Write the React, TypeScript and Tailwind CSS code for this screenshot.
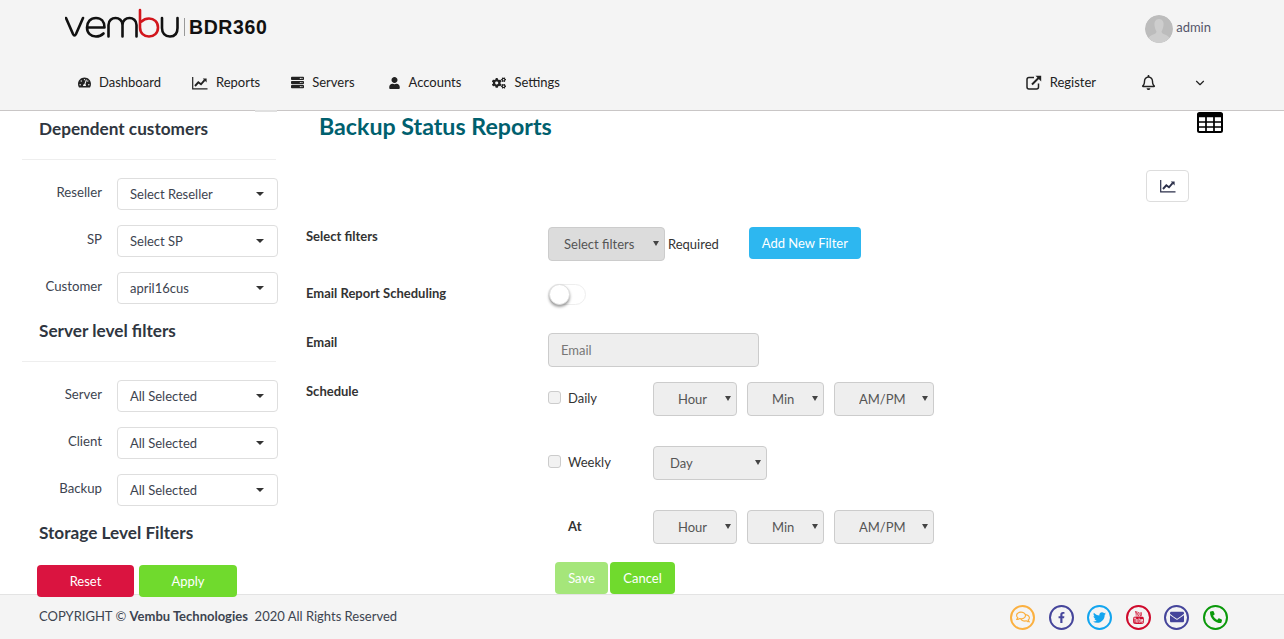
import { FaCogs, FaEnvelope, FaFacebookF, FaPhoneAlt, FaRegBell, FaRegComments, FaServer, FaTachometerAlt, FaTwitter, FaUser } from 'react-icons/fa';
import { FiChevronDown } from 'react-icons/fi';
import { TfiYoutube } from 'react-icons/tfi';

function ChartIcon({ color = '#222222' }: { color?: string }) {
  return (
    <svg width="16" height="14" viewBox="0 0 16 14" fill="none" stroke={color}>
      <path d="M0.7 1 V12.8 H15.5" strokeWidth="1.2" />
      <path d="M3 10 L6.3 6.3 L9 8.3 L12.6 4.2" strokeWidth="1.9" />
      <path d="M10.8 2.6 H14.6 V6.4 Z" fill={color} stroke="none" />
    </svg>
  );
}

function TableIcon() {
  return (
    <svg width="26" height="21" viewBox="0 0 26 21" fill="none" stroke="#000000">
      <rect x="1" y="1" width="24" height="19" rx="1.5" strokeWidth="2" />
      <path d="M0 3.5 H26" strokeWidth="3.5" />
      <path d="M1 10 H25 M1 15 H25 M9 3 V20 M17 3 V20" strokeWidth="1.7" />
    </svg>
  );
}

const navItems = [
  { label: 'Dashboard', icon: <FaTachometerAlt className="w-[13px] h-[13px]" /> },
  { label: 'Reports', icon: <ChartIcon /> },
  { label: 'Servers', icon: <FaServer className="w-[13px] h-[13px]" /> },
  { label: 'Accounts', icon: <FaUser className="w-[11px] h-[12px] ml-[3px] mr-[1px]" /> },
  { label: 'Settings', icon: <FaCogs className="w-[14px] h-[14px]" /> },
];

const socials = [
  { color: 'border-[#fbb040] text-[#fbb040]', icon: <FaRegComments className="w-[14px] h-[14px]" /> },
  { color: 'border-[#45459b] text-[#45459b]', icon: <FaFacebookF className="w-[11px] h-[11px]" /> },
  { color: 'border-[#12a5ef] text-[#12a5ef]', icon: <FaTwitter className="w-[13px] h-[13px]" /> },
  { color: 'border-[#cf0a2c] text-[#cf0a2c]', icon: <TfiYoutube className="w-[13px] h-[13px]" /> },
  { color: 'border-[#45459b] text-[#45459b]', icon: <FaEnvelope className="w-[14px] h-[14px]" /> },
  { color: 'border-[#0a990a] text-[#0a990a]', icon: <FaPhoneAlt className="w-[12px] h-[12px] scale-x-[-1] -scale-y-100 rotate-180" /> },
];

function Logo() {
  return (
    <svg width="120" height="32" viewBox="0 0 120 32" fill="none" strokeWidth="2.6" strokeLinecap="round" strokeLinejoin="round">
      <g stroke="#111">
        <path d="M1 10 L8 26 Q9.5 29 11 26 L18 10" />
        <path d="M22.5 19.5 H39.5 C39.5 13.5 36 10 31 10 C25.5 10 22 14 22 19.5 C22 25 26 28.5 31 28.5 C34 28.5 36.5 27.5 38.5 25.5" />
        <path d="M43.5 28.5 V17 C43.5 12.5 47 10 50.5 10 C54 10 57.5 12.5 57.5 17 V28.5 M57.5 17 C57.5 12.5 61 10 64.5 10 C68 10 71.5 12.5 71.5 17 V28.5" />
        <path d="M97 10 V20 C97 25 100 28.5 105 28.5 C110 28.5 112.5 25 112.5 20 V10" />
      </g>
      <path stroke="#d2161c" d="M75 2 V19.5 C75 25 79 28.5 84 28.5 C89 28.5 93 25 93 19.5 C93 14 89 10.5 84 10.5 C81 10.5 78.5 11.5 76.5 13.5" />
    </svg>
  );
}

function Avatar() {
  return (
    <svg width="28" height="28" viewBox="0 0 28 28" className="rounded-full">
      <circle cx="14" cy="14" r="14" fill="#bcbcbc" />
      <path fill="#cdcdcd" d="M14 4 C10.5 4 9 7 9.5 10.5 C10 13 10.5 15 11.5 16.5 C11.5 18 10 19 7 20 C5 20.8 4 22 3.5 23 C6 26 10 28 14 28 C18 28 22 26 24.5 23 C24 22 23 20.8 21 20 C18 19 16.5 18 16.5 16.5 C17.5 15 18 13 18.5 10.5 C19 7 17.5 4 14 4 Z" />
    </svg>
  );
}

function RegisterIcon() {
  return (
    <svg width="16" height="15" viewBox="0 0 16 15" fill="none" stroke="#222" strokeWidth="1.5">
      <path d="M8 2.5 H3 C1.8 2.5 1 3.3 1 4.5 V12 C1 13.2 1.8 14 3 14 H10.5 C11.7 14 12.5 13.2 12.5 12 V8.5" />
      <path d="M6 9.5 L13.5 2" strokeWidth="2" />
      <path d="M9.5 0.8 H15.2 V6.5 Z" fill="#222" stroke="none" />
    </svg>
  );
}

function SideSelect({ label, value }: { label: string; value: string }) {
  return (
    <div className="flex items-start h-8 w-[256px]">
      <div className="w-[80px] pt-1 text-right text-[13.2px] leading-5 text-[#3d4450]">{label}</div>
      <div className="ml-[15px] w-[161px] h-8 flex items-center justify-between pl-3 pr-[13px] border border-[#dedede] rounded bg-white text-[13px] text-[#3d4450]">
        <span className="mt-[1px]">{value}</span>
        <span className="border-x-[4px] border-t-[4px] border-x-transparent border-t-[#333]" />
      </div>
    </div>
  );
}

function SideSection({ title, rows }: { title: string; rows: { label: string; value: string }[] }) {
  return (
    <div>
      <h3 className="pl-[17px] text-[17.2px] leading-6 font-bold text-[#2f3640]">{title}</h3>
      <div className="mt-[18px] w-[254px] border-t border-[#eeeeee]" />
      <div className="mt-[18px] flex flex-col gap-[15px]">
        {rows.map((r) => (
          <SideSelect key={r.label} label={r.label} value={r.value} />
        ))}
      </div>
    </div>
  );
}

function FormSelect({ options, width, pad, bg = 'bg-[#eeeeee]' }: { options: string; width: string; pad: string; bg?: string }) {
  return (
    <div className={`relative ${width}`}>
      <select className={`appearance-none w-full h-[34px] pt-[2px] ${pad} pr-0 ${bg} border border-[#cccccc] rounded text-[13px] text-[#555555]`}>
        <option>{options}</option>
      </select>
      <span className="absolute right-[6px] top-[14px] border-x-[3px] border-t-[5px] border-x-transparent border-t-[#444444]" />
    </div>
  );
}

function TimeSelects() {
  return (
    <div className="flex gap-[10px]">
      <FormSelect options="Hour" width="w-[84px]" pad="pl-[24px]" />
      <FormSelect options="Min" width="w-[77px]" pad="pl-[24px]" />
      <FormSelect options="AM/PM" width="w-[100px]" pad="pl-[24px]" />
    </div>
  );
}

function FormLabel({ children }: { children: string }) {
  return <div className="w-[242px] shrink-0 text-[13px] leading-[18px] font-bold text-[#333333]">{children}</div>;
}

export default function App() {
  return (
    <div className="w-[1284px] h-[639px] overflow-hidden flex flex-col bg-white font-[Lato,sans-serif] text-[#333333]">
      <header className="relative h-[111px] shrink-0 bg-[#f4f4f4] border-b border-[#c9c6c6]">
        <div className="h-[55px] flex items-start justify-between">
          <div className="flex items-start pl-[65px] pt-2">
            <Logo />
            <div className="mt-[10px] -ml-[1px] w-px h-[18px] bg-[#999999]" />
            <span className="ml-[4px] mt-[6px] font-['Liberation_Sans',sans-serif] font-bold text-[19.5px] leading-[26px] tracking-[0.6px] text-[#111111]">BDR360</span>
          </div>
          <div className="flex items-center gap-[3px] pt-[15px] pr-[73px] text-[13px] text-[#55566a]">
            <Avatar />
            <span className="-mt-[2px]">admin</span>
          </div>
        </div>
        <nav className="h-[55px] flex items-center justify-between text-[13px] text-[#222222]">
          <div className="ml-[78px] flex items-center gap-[31px]">
            {navItems.map((item) => (
              <div key={item.label} className="flex items-center gap-2">
                {item.icon}
                <span>{item.label}</span>
              </div>
            ))}
          </div>
          <div className="flex items-center mr-[77px]">
            <RegisterIcon />
            <span className="ml-2">Register</span>
            <FaRegBell className="ml-[45px] w-[15px] h-[15px]" />
            <FiChevronDown className="ml-[37px] w-[14px] h-[14px]" />
          </div>
        </nav>
        <div className="absolute left-[255px] -bottom-[2px] w-[22px] h-[2px] bg-[#e0e0e0]" />
      </header>

      <main className="h-[483px] shrink-0 flex">
        <aside className="w-[290px] shrink-0 pl-[22px] pt-[6px]">
          <SideSection
            title="Dependent customers"
            rows={[
              { label: 'Reseller', value: 'Select Reseller' },
              { label: 'SP', value: 'Select SP' },
              { label: 'Customer', value: 'april16cus' },
            ]}
          />
          <div className="mt-[15px]">
            <SideSection
              title="Server level filters"
              rows={[
                { label: 'Server', value: 'All Selected' },
                { label: 'Client', value: 'All Selected' },
                { label: 'Backup', value: 'All Selected' },
              ]}
            />
          </div>
          <h3 className="mt-[15px] pl-[17px] text-[17.2px] leading-6 font-bold text-[#2f3640]">Storage Level Filters</h3>
          <div className="relative z-10 mt-5 ml-[15px] flex gap-[5px] text-[13px] text-white">
            <button className="w-[97px] h-8 pt-px rounded bg-[#da1440]">Reset</button>
            <button className="w-[98px] h-8 pt-px rounded bg-[#70da2d]">Apply</button>
          </div>
        </aside>

        <section className="flex-1 pl-4">
          <div className="h-8 flex items-start justify-between pr-[61px]">
            <h1 className="ml-[13px] text-[23.2px] leading-[30px] font-bold text-[#00606e]">Backup Status Reports</h1>
            <div className="mt-px">
              <TableIcon />
            </div>
          </div>
          <div className="mt-[27px] flex justify-end pr-[95px]">
            <div className="w-[43px] h-8 flex items-center justify-center rounded border border-[#dddddd]">
              <ChartIcon color="#2b2f4a" />
            </div>
          </div>

          <div className="mt-[25px] flex items-start">
            <FormLabel>Select filters</FormLabel>
            <FormSelect options="Select filters" width="w-[117px]" pad="pl-[15px]" bg="bg-[#dcdcdc]" />
            <span className="ml-[3px] mt-[7px] text-[13px] leading-5">Required</span>
            <button className="ml-[30px] w-[112px] h-8 pt-px rounded bg-[#2db7f0] text-[13px] text-white">Add New Filter</button>
          </div>

          <div className="mt-[23px] flex items-start">
            <FormLabel>Email Report Scheduling</FormLabel>
            <div className="relative w-[38px] h-[21px] rounded-full border border-[#eeeeee] bg-white">
              <div className="absolute left-0 -top-px w-[21px] h-[21px] rounded-full bg-white border border-[#dddddd] shadow-[0_2px_3px_rgba(0,0,0,0.4)]" />
            </div>
          </div>

          <div className="mt-[28px] flex items-start">
            <FormLabel>Email</FormLabel>
            <input placeholder="Email" className="w-[211px] h-[34px] px-3 bg-[#eeeeee] border border-[#cccccc] rounded text-[13px] placeholder:text-[#777777]" />
          </div>

          <div className="mt-[15px] flex items-start">
            <FormLabel>Schedule</FormLabel>
            <div className="flex flex-col">
              <div className="flex items-start">
                <div className="w-[105px] pt-[6px] flex items-start text-[13px] leading-5">
                  <span className="mt-[3px] w-[13px] h-[13px] rounded-[3px] border border-[#cccccc] bg-[#f2f2f2]" />
                  <span className="ml-[7px]">Daily</span>
                </div>
                <TimeSelects />
              </div>
              <div className="mt-[30px] flex items-start">
                <div className="w-[105px] pt-[6px] flex items-start text-[13px] leading-5">
                  <span className="mt-[3px] w-[13px] h-[13px] rounded-[3px] border border-[#cccccc] bg-[#f2f2f2]" />
                  <span className="ml-[7px]">Weekly</span>
                </div>
                <FormSelect options="Day" width="w-[114px]" pad="pl-[16px]" />
              </div>
              <div className="mt-[30px] flex items-start">
                <div className="w-[105px] pt-[6px] pl-5 text-[13px] leading-5 font-bold">At</div>
                <TimeSelects />
              </div>
              <div className="relative z-10 mt-[18px] ml-[7px] flex gap-[2px] text-[13px] text-white">
                <button className="w-[53px] h-8 pt-px rounded bg-[#a5e67a]">Save</button>
                <button className="w-[65px] h-8 pt-px rounded bg-[#70da2d]">Cancel</button>
              </div>
            </div>
          </div>
        </section>
      </main>

      <footer className="flex-1 flex items-center justify-between pl-[39px] pr-[56px] bg-[#f4f4f4] border-t border-[#e3e3e3] text-[13px] text-[#3d4450]">
        <div className="-mt-[1px]">
          COPYRIGHT © <span className="font-bold">Vembu Technologies</span>&nbsp; 2020 All Rights Reserved
        </div>
        <div className="flex items-center gap-[13.6px]">
          {socials.map((s, i) => (
            <div key={i} className={`w-[25px] h-[25px] rounded-full border-2 flex items-center justify-center ${s.color}`}>
              {s.icon}
            </div>
          ))}
        </div>
      </footer>
    </div>
  );
}
